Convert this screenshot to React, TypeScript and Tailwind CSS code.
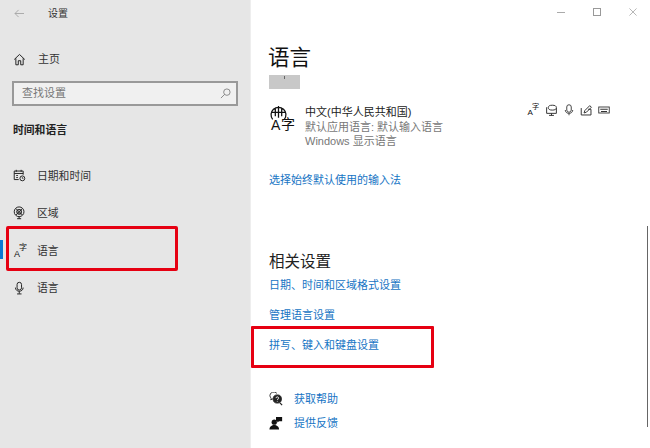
import React from "react";

const F = "font-['Liberation_Sans','Noto_Sans_CJK_SC',sans-serif]";

function Ico({ children, className = "w-4 h-4" }: { children: React.ReactNode; className?: string }) {
  return (
    <svg viewBox="0 0 16 16" fill="none" stroke="currentColor" strokeWidth={1} className={className}>
      {children}
    </svg>
  );
}

function LangGlyph({ className = "" }: { className?: string }) {
  return (
    <span className={`relative block w-[14px] h-[14px] ${className}`}>
      <span className="absolute left-[1px] top-[5px] text-[9px] leading-[10px] text-[#111]">A</span>
      <span className="absolute left-[6px] top-[-1px] text-[8px] leading-[9px] text-[#111]">字</span>
    </span>
  );
}

function NavItem({ icon, label, className = "" }: { icon: React.ReactNode; label: string; className?: string }) {
  return (
    <div className={`flex items-center pl-[13px] h-[37.5px] relative ${className}`}>
      <span className="w-[24px] text-[#222] flex items-center">{icon}</span>
      <span className="text-[10.8px] text-[#333]">{label}</span>
    </div>
  );
}

function Link({ children, className = "" }: { children: React.ReactNode; className?: string }) {
  return <div className={`text-[11px] leading-[16px] text-[#1674c4] ${className}`}>{children}</div>;
}

export default function App() {
  return (
    <div className={`relative w-[650px] h-[448px] overflow-hidden flex bg-white ${F}`}>
      <aside className="w-[250px] shrink-0 bg-[#e6e6e6] flex flex-col">
        <div className="h-[27px] flex items-center pl-[14px]">
          <svg viewBox="0 0 12 10" className="w-[11px] h-[9px] text-[#a5a5a5]" fill="none" stroke="currentColor" strokeWidth={1}>
            <path d="M11 5H1M5 1 1 5l4 4" />
          </svg>
          <span className="ml-[23px] text-[10px] text-[#333]">设置</span>
        </div>
        <div className="mt-[21px] h-[22px] flex items-center pl-[13px]">
          <Ico className="w-[13px] h-[13px] text-[#222]">
            <path d="M1.500 8 8 1.800 14.500 8M3.500 6.500V14.500h3V9.500h3V14.500h3V6.500" strokeWidth={1.2} />
          </Ico>
          <span className="ml-[12px] text-[11px] text-[#333]">主页</span>
        </div>
        <div className="mt-[11px] mx-[12px] w-[226px] h-[25px] border-2 border-[#999] bg-[#f0f0f0] flex items-center justify-between pl-[8px] pr-[5px]">
          <span className="text-[11px] text-[#777]">查找设置</span>
          <svg viewBox="0 0 12 12" className="w-[11px] h-[11px] text-[#777]" fill="none" stroke="currentColor" strokeWidth={0.9}>
            <circle cx="7.500" cy="4.500" r="3.500" />
            <path d="M5 7 1 11" />
          </svg>
        </div>
        <div className="mt-[16px] ml-[13px] text-[10.8px] leading-[16px] font-bold text-[#222]">时间和语言</div>
        <div className="mt-[19px] flex flex-col">
          <NavItem
            label="日期和时间"
            icon={
              <Ico className="w-[13px] h-[13px]">
                <path d="M7 13H1.500V2.500h11V7M1.500 5.500h11M4 1v2.500M10 1v2.500M4 8h2M4 10.500h2" strokeWidth={1.2} />
                <circle cx="11.500" cy="11.500" r="3" strokeWidth={1.2} />
                <path d="M11.500 10v1.500h1.300" />
              </Ico>
            }
          />
          <NavItem
            label="区域"
            icon={
              <Ico className="w-[13px] h-[14px]">
                <circle cx="7.500" cy="6.500" r="6" strokeWidth={1.2} />
                <circle cx="7.500" cy="6.500" r="2.800" strokeWidth={1.4} />
                <path d="M3.500 2.500l8 8M11.500 2.500l-8 8M7.500 12.500v2.500M5 15h5" strokeWidth={1.2} />
              </Ico>
            }
          />
          <NavItem label="语言" icon={<LangGlyph />} />
          <NavItem
            label="语言"
            icon={
              <Ico className="w-[13px] h-[14px]">
                <rect x="5" y="1" width="5.500" height="9.500" rx="2.700" strokeWidth={1.2} />
                <path d="M3 7.500c0 6 9.500 6 9.500 0M7.700 12v3M5 15.300h5.500" strokeWidth={1.2} />
              </Ico>
            }
          />
        </div>
      </aside>

      <main className="flex-1 relative border-l border-[#eee] flex flex-col pl-[18px]">
        <h1 className="mt-[43px] -ml-[1px] text-[21.500px] leading-[30px] font-normal text-[#111]">语言</h1>
        <div className="mt-[2px] w-[31px] h-[14px] bg-[#c8c8c8] flex justify-center">
          <span className="mt-[1px] w-[1px] h-[3px] bg-[#666]" />
        </div>
        <div className="mt-[15px] flex items-start">
          <span className="relative w-[27px] h-[28px] block text-[#111] shrink-0">
            <svg viewBox="0 0 16 16" className="absolute left-[1px] top-[1px] w-[17px] h-[17px]" fill="none" stroke="currentColor" strokeWidth={1.200}>
              <path d="M2.500 13.500A7 7 0 1 1 13.500 13.500M1 7h14M8 1v11M5 2.500v8M11 2.500v8" />
            </svg>
            <span className="absolute left-[2px] top-[13px] text-[14px] leading-[16px]">A</span>
            <span className="absolute left-[12px] top-[12px] text-[14px] leading-[16px]">字</span>
          </span>
          <div className="ml-[9px] w-[208px] mt-[1px]">
            <div className="text-[11px] leading-[14.5px] text-[#222]">中文(中华人民共和国)</div>
            <div className="text-[11px] leading-[14.5px] text-[#777]">默认应用语言: 默认输入语言</div>
            <div className="text-[11px] leading-[14.5px] text-[#777]">Windows 显示语言</div>
          </div>
          <div className="ml-[13px] flex items-center gap-[5px] text-[#333] -mt-[1px]">
            <LangGlyph className="scale-90" />
            <Ico className="w-[13px] h-[13px]">
              <path d="M2 4v7.500h12V5M5 14h6M8 11.500V14" strokeWidth={1.200} />
              <ellipse cx="9" cy="4.500" rx="5" ry="3" strokeWidth={1.200} />
            </Ico>
            <Ico className="w-[12px] h-[14px]">
              <rect x="5" y="1" width="6" height="10" rx="3" strokeWidth={1.200} />
              <path d="M3 8c0 6 10 6 10 0M8 13v2" strokeWidth={1.200} />
            </Ico>
            <Ico className="w-[13px] h-[13px]">
              <path d="M1.500 5v8.500h12V6.500H10" strokeWidth={1.200} />
              <path d="M5 11l1-3 6-6 2 2-6 6z" strokeWidth={1.200} />
            </Ico>
            <Ico className="w-[12px] h-[12px]">
              <rect x="1" y="4" width="14" height="8" strokeWidth={1.200} />
              <path d="M3 7h10M4 10h8" strokeWidth={1.400} />
            </Ico>
          </div>
        </div>
        <Link className="mt-[23.5px]">选择始终默认使用的输入法</Link>

        <h2 className="mt-[64px] text-[15.500px] leading-[20px] font-normal text-[#222]">相关设置</h2>
        <Link className="mt-[5px]">日期、时间和区域格式设置</Link>
        <Link className="mt-[14px]">管理语言设置</Link>
        <Link className="mt-[14px]">拼写、键入和键盘设置</Link>

        <div className="mt-[38px] flex items-center h-[16px]">
          <Ico className="w-[14px] h-[14px] text-[#222]">
            <path d="M9 1.500a4.500 4 0 0 0-8 2.500c0 1.500.8 2.500 1.500 3L2 9l3-1.500" />
            <circle cx="9.500" cy="8" r="4.700" fill="currentColor" />
            <path d="M12.500 12.500 15 15" strokeWidth={1.400} />
            <path d="M8 7c0-2 3-2 3 0 0 1-1.500 1-1.500 2.200M9.500 10.200v.8" stroke="#fff" strokeWidth={1} />
          </Ico>
          <span className="ml-[11px] text-[11px] text-[#1674c4]">获取帮助</span>
        </div>
        <div className="mt-[8px] flex items-center h-[16px]">
          <Ico className="w-[14px] h-[14px] text-[#111]">
            <circle cx="6" cy="7" r="3" fill="currentColor" stroke="none" />
            <path d="M0.500 15.500c0-7 11-7 11 0z" fill="currentColor" stroke="none" />
            <path d="M8 1h7v5h-3.500L9.500 7.500V6H8z" fill="currentColor" stroke="none" />
          </Ico>
          <span className="ml-[11px] text-[11px] text-[#1674c4]">提供反馈</span>
        </div>

        {/* window controls */}
        <div className="absolute top-[8px] right-[13px] flex items-center gap-[28px] text-[#999]">
          <span className="w-[8px] h-[1px] bg-[#aaa]" />
          <span className="w-[8px] h-[8px] border border-[#999]" />
          <svg viewBox="0 0 9 9" className="w-[8px] h-[8px]" fill="none" stroke="currentColor" strokeWidth={0.8}>
            <path d="M.5.5l8 8M8.500.5l-8 8" />
          </svg>
        </div>
        {/* scrollbar */}
        <span className="absolute right-[2px] top-[226px] w-[1px] h-[201px] bg-[#666]" />
      </main>

      {/* selection indicator and annotations */}
      <span className="absolute left-0 top-[240px] w-[3px] h-[19px] bg-[#0a78d4]" />
      <span className="absolute left-[6px] top-[226px] w-[172px] h-[45px] border-[3px] border-[#e60012] rounded-[2px]" />
      <span className="absolute left-[251px] top-[326px] w-[183px] h-[42px] border-[3px] border-[#e60012] rounded-[1px]" />
    </div>
  );
}
